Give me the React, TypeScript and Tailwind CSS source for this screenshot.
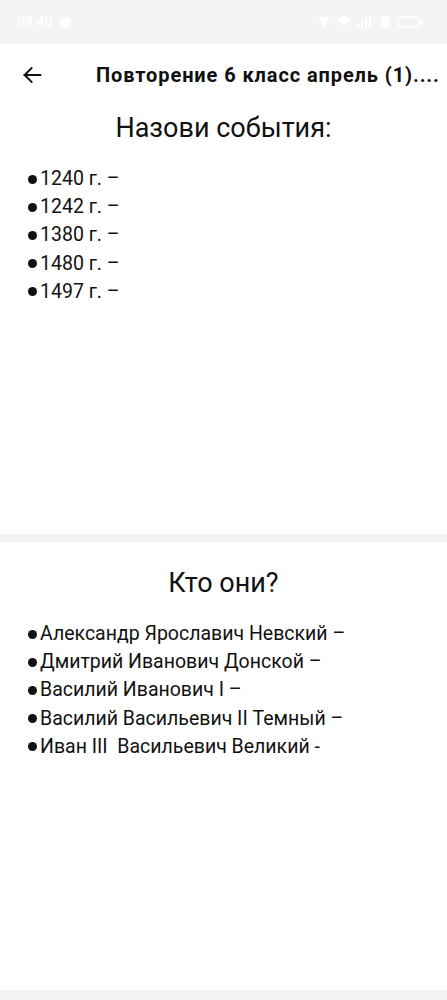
import React from "react";

const font = { fontFamily: "Roboto, 'Noto Sans', Arial, sans-serif" };

function StatusBar() {
  return (
    <div className="h-[44px] bg-[#f4f4f4] flex items-center justify-between pl-[17px] pr-[24px] text-white">
      <div className="flex items-center gap-[6px] text-[14px] font-medium">
        <span>09:40</span>
        <svg width="13" height="13" viewBox="0 0 12 12" fill="white"><circle cx="6" cy="6" r="5" /></svg>
      </div>
      <div className="flex items-center gap-[6px]">
        <svg width="14" height="12" viewBox="0 0 14 12" fill="white"><path d="M1 1h12L7 11z" /></svg>
        <svg width="14" height="12" viewBox="0 0 14 12" fill="white"><path d="M7 11 0 3a10 10 0 0 1 14 0z" /></svg>
        <svg width="16" height="12" viewBox="0 0 16 12" fill="white"><rect x="0" y="8" width="2" height="4" /><rect x="4" y="5" width="2" height="7" /><rect x="8" y="2" width="2" height="10" /><rect x="12" y="0" width="2" height="12" /></svg>
        <svg width="12" height="12" viewBox="0 0 12 12" fill="white"><path d="M2 0h8v12H2z" /></svg>
        <svg width="26" height="12" viewBox="0 0 26 12" fill="none" stroke="white" strokeWidth="1.5"><rect x="1" y="1" width="21" height="10" rx="2" /><rect x="23" y="4" width="2" height="4" fill="white" /></svg>
      </div>
    </div>
  );
}

function Header() {
  return (
    <div className="h-[62px] bg-white flex items-center">
      <div className="w-[96px] flex items-center pl-[21px]">
        <svg width="22" height="22" viewBox="0 0 24 24" fill="none" stroke="#111" strokeWidth="2.2" strokeLinecap="square">
          <path d="M21 12H4" />
          <path d="M11.5 4.5 4 12l7.5 7.5" />
        </svg>
      </div>
      <div className="flex-1 text-[20px] tracking-[0.9px] font-bold text-[#111] whitespace-nowrap overflow-hidden">
        Повторение 6 класс апрель (1)....
      </div>
    </div>
  );
}

function Slide({ title, items }: { title: string; items: string[] }) {
  return (
    <div className="bg-white">
      <div className="text-center text-[27px] text-[#111] leading-[30px]">{title}</div>
      <ul className="mt-[22px] pl-[28px] flex flex-col">
        {items.map((t) => (
          <li key={t} className="flex items-center text-[19.5px] leading-[28.2px] text-[#111]">
            <span className="w-[9px] h-[9px] rounded-full bg-[#111] mr-[3px] shrink-0" />
            <span>{t}</span>
          </li>
        ))}
      </ul>
    </div>
  );
}

export default function App() {
  return (
    <div className="w-[447px] h-[1000px] bg-white overflow-hidden" style={font}>
      <StatusBar />
      <Header />
      <div className="h-[428px] bg-white pt-[7px]">
        <Slide
          title="Назови события:"
          items={["1240 г. –", "1242 г. –", "1380 г. –", "1480 г. –", "1497 г. –"]}
        />
      </div>
      <div className="h-[8px] bg-[#f2f2f2]" />
      <div className="h-[448px] bg-white pt-[26px]">
        <Slide
          title="Кто они?"
          items={[
            "Александр Ярославич Невский –",
            "Дмитрий Иванович Донской –",
            "Василий Иванович I –",
            "Василий Васильевич II Темный –",
            "Иван III\u00a0 Васильевич Великий -",
          ]}
        />
      </div>
      <div className="h-[11px] bg-[#f2f2f2]" />
    </div>
  );
}
